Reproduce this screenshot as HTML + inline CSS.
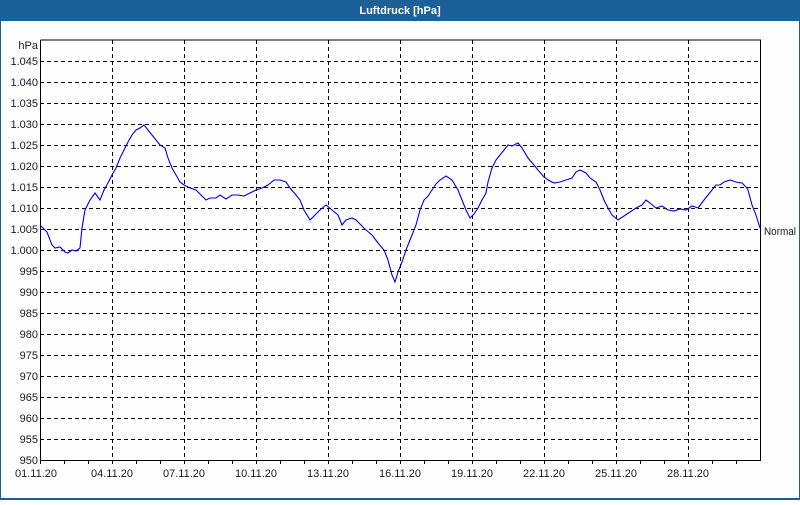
<!DOCTYPE html><html><head><style>
body{margin:0;width:800px;height:500px;background:#fff;overflow:hidden}
svg text{font-family:"Liberation Sans",sans-serif;font-size:11px;fill:#1a1a2a}
</style></head><body>
<svg width="800" height="500" xmlns="http://www.w3.org/2000/svg">
<rect x="0" y="0" width="800" height="500" fill="#1c6098"/>
<rect x="1" y="21" width="798" height="477" fill="#fdfefd"/>
<text x="400" y="14" text-anchor="middle" style="fill:#fff;font-weight:bold;font-size:11px">Luftdruck [hPa]</text>
<g stroke="#000" stroke-dasharray="4,3" stroke-width="1">
<path d="M40 61.5H760M40 82.5H760M40 103.5H760M40 124.5H760M40 145.5H760M40 166.5H760M40 187.5H760M40 208.5H760M40 229.5H760M40 250.5H760M40 271.5H760M40 292.5H760M40 313.5H760M40 334.5H760M40 355.5H760M40 376.5H760M40 397.5H760M40 418.5H760M40 439.5H760"/>
<path d="M112.5 40V460M184.5 40V460M256.5 40V460M328.5 40V460M400.5 40V460M472.5 40V460M544.5 40V460M616.5 40V460M688.5 40V460"/>
</g>
<path d="M40.5 40V460.5H760.5V40H40.5" fill="none" stroke="#000" stroke-width="1"/>
<g stroke="#000"><path d="M64.5 460v4M88.5 460v4M112.5 460v4M136.5 460v4M160.5 460v4M184.5 460v4M208.5 460v4M232.5 460v4M256.5 460v4M280.5 460v4M304.5 460v4M328.5 460v4M352.5 460v4M376.5 460v4M400.5 460v4M424.5 460v4M448.5 460v4M472.5 460v4M496.5 460v4M520.5 460v4M544.5 460v4M568.5 460v4M592.5 460v4M616.5 460v4M640.5 460v4M664.5 460v4M688.5 460v4M712.5 460v4M736.5 460v4M40.5 460v4"/></g>
<g text-anchor="end">
<text x="38" y="49">hPa</text>
<text x="38" y="65">1.045</text><text x="38" y="86">1.040</text><text x="38" y="107">1.035</text><text x="38" y="128">1.030</text><text x="38" y="149">1.025</text><text x="38" y="170">1.020</text><text x="38" y="191">1.015</text><text x="38" y="212">1.010</text><text x="38" y="233">1.005</text><text x="38" y="254">1.000</text><text x="38" y="275">995</text><text x="38" y="296">990</text><text x="38" y="317">985</text><text x="38" y="338">980</text><text x="38" y="359">975</text><text x="38" y="380">970</text><text x="38" y="401">965</text><text x="38" y="422">960</text><text x="38" y="443">955</text><text x="38" y="464">950</text>
</g>
<g text-anchor="middle">
<text x="36" y="477">01.11.20</text><text x="112" y="477">04.11.20</text><text x="184" y="477">07.11.20</text><text x="256" y="477">10.11.20</text><text x="328" y="477">13.11.20</text><text x="400" y="477">16.11.20</text><text x="472" y="477">19.11.20</text><text x="544" y="477">22.11.20</text><text x="616" y="477">25.11.20</text><text x="688" y="477">28.11.20</text>
</g>
<text x="764" y="235" textLength="32" lengthAdjust="spacingAndGlyphs">Normal</text>
<polyline fill="none" stroke="#0000ee" stroke-width="1.1" points="40,225 47,232 52,245 55,248 60,247 65,252 68,253 72,250 76,251 80,248 82,228 85,210 90,200 95,193 100,200 104,190 108,183 112,175 116,168 120,158 124,150 128,142 132,135 136,130 140,128 144,125 148,130 152,135 156,140 160,145 165,148 168,158 172,168 176,175 180,182 184,185 190,188 196,190 202,196 206,200 210,198 216,198 220,195 226,199 232,195 238,195 244,196 250,193 256,190 262,188 268,185 274,180 280,180 286,182 290,188 296,195 300,200 304,210 310,220 314,216 320,210 326,205 332,210 338,215 342,225 346,220 352,218 356,220 362,226 366,230 372,235 378,243 384,250 388,260 392,275 395,282 398,272 402,262 406,250 410,240 416,225 420,210 424,200 428,196 432,190 436,184 440,180 446,176 452,180 458,190 462,200 466,210 470,218 474,214 478,208 482,200 486,193 488,182 492,168 496,160 500,155 504,150 508,145 512,146 518,143 522,148 528,158 534,165 538,170 544,177 548,180 554,183 560,182 566,180 572,178 576,172 580,170 586,173 590,178 596,182 600,190 604,200 608,208 612,215 618,220 624,216 630,212 636,208 642,205 646,200 650,203 656,208 662,206 668,210 674,211 680,209 686,210 692,206 698,208 704,200 708,195 712,190 716,185 720,185 724,182 730,180 736,182 742,183 746,187 748,190 752,205 756,215 760,228"/>
</svg>
</body></html>
